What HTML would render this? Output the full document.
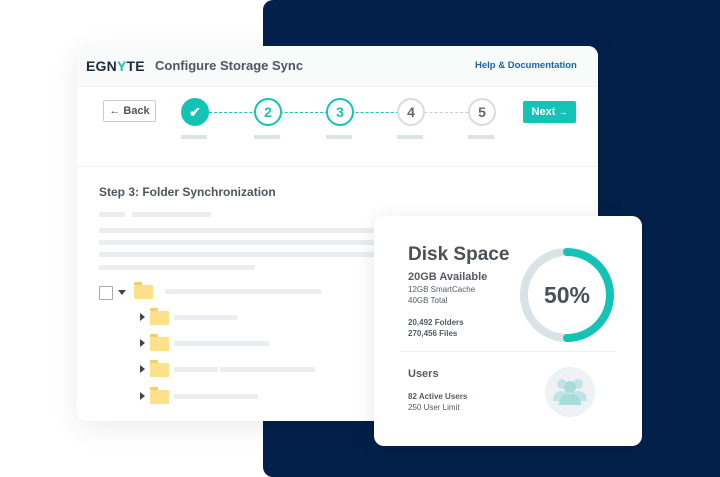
<!DOCTYPE html>
<html><head><style>
*{margin:0;padding:0;box-sizing:border-box}
body{width:720px;height:477px;background:#fff;position:relative;overflow:hidden;font-family:"Liberation Sans",sans-serif}
.navy{position:absolute;left:263px;top:0;width:467px;height:477px;background:#02204a;border-radius:10px}
.card{position:absolute;left:77px;top:46px;width:521px;height:375px;background:#fff;border-radius:10px;box-shadow:0 6px 30px rgba(0,0,0,.08);overflow:hidden}
.hdr{height:41px;background:#f9fafa;border-bottom:1px solid #eef0f1;position:relative}
.abs{position:absolute}
.bar{position:absolute;height:5px;background:#eaeef0}
.circ{position:absolute;width:28px;height:28px;border-radius:50%;border:2px solid #13c4b6;background:#fff;font-weight:bold;font-size:14px;color:#13c4b6;text-align:center;line-height:24px}
.gray{border-color:#d8dcde;color:#666}
.dash{position:absolute;top:66px;height:0;border-top:1px dashed #13c4b6}
.ul{position:absolute;top:89px;width:26px;height:4px;background:#dde3e5}
.fold{position:absolute;width:19px;height:14px;background:#fde08a;border-radius:1px}
.fold:before{content:"";position:absolute;left:0;top:-3px;width:8px;height:3px;background:#f3cd6a;border-radius:1px 1px 0 0}
.tri{position:absolute;width:0;height:0;border-top:4px solid transparent;border-bottom:4px solid transparent;border-left:5px solid #444}
.disk{position:absolute;left:374px;top:216px;width:268px;height:230px;background:#fff;border-radius:10px;box-shadow:0 4px 20px rgba(0,0,0,.1)}
.t{position:absolute;color:#555b62;white-space:nowrap}
</style></head><body>
<div class="navy"></div>
<div class="card">
 <div class="hdr">
  <div class="abs" style="left:9px;top:12px;font-weight:900;font-size:14px;color:#1b2a44;letter-spacing:0.2px">EGN<span style="color:#13c4b6">Y</span>TE</div>
  <div class="abs" style="left:78px;top:12px;font-weight:bold;font-size:13px;color:#4e565f">Configure Storage Sync</div>
  <div class="abs" style="left:398px;top:14px;font-weight:bold;font-size:9.5px;color:#1566b5">Help &amp; Documentation</div>
 </div>
 <div class="abs" style="left:26px;top:54px;width:53px;height:22px;border:1px solid #c8ccd0;border-radius:2px;font-size:11px;font-weight:bold;color:#555;text-align:center;line-height:20px">← Back</div>
 <div class="dash" style="left:132px;width:200px"></div>
 <div class="dash" style="left:332px;width:80px;border-color:#ccc"></div>
 <div class="circ" style="left:104px;top:52px;background:#13c4b6;color:#fff">✔</div>
 <div class="circ" style="left:177px;top:52px">2</div>
 <div class="circ" style="left:249px;top:52px">3</div>
 <div class="circ gray" style="left:320px;top:52px">4</div>
 <div class="circ gray" style="left:391px;top:52px">5</div>
 <div class="ul" style="left:104px"></div><div class="ul" style="left:177px"></div><div class="ul" style="left:249px"></div><div class="ul" style="left:320px"></div><div class="ul" style="left:391px"></div>
 <div class="abs" style="left:446px;top:55px;width:53px;height:22px;background:#13c4b6;border-radius:2px;color:#fff;font-weight:bold;font-size:11px;text-align:center;line-height:22px">Next <span style="font-size:9px">→</span></div>
 <div class="abs" style="left:0;top:120px;width:521px;border-top:1px solid #eef0f1"></div>
 <div class="abs" style="left:22px;top:139px;font-weight:bold;font-size:12px;color:#4e565f">Step 3: Folder Synchronization</div>
 <div class="bar" style="left:22px;top:166px;width:26px"></div>
 <div class="bar" style="left:55px;top:166px;width:79px"></div>
 <div class="bar" style="left:22px;top:182px;width:280px"></div>
 <div class="bar" style="left:22px;top:194px;width:280px"></div>
 <div class="bar" style="left:22px;top:206px;width:280px"></div>
 <div class="bar" style="left:22px;top:219px;width:156px"></div>
 <div class="abs" style="left:22px;top:240px;width:14px;height:14px;border:1px solid #aaa;border-radius:1px"></div>
 <div class="abs" style="left:41px;top:244px;border-left:4px solid transparent;border-right:4px solid transparent;border-top:5px solid #444"></div>
 <div class="fold" style="left:57px;top:239px"></div>
 <div class="bar" style="left:88px;top:243px;width:156px"></div>
 <div class="tri" style="left:63px;top:267px"></div><div class="fold" style="left:73px;top:265px"></div><div class="bar" style="left:97px;top:269px;width:63px"></div>
 <div class="tri" style="left:63px;top:293px"></div><div class="fold" style="left:73px;top:291px"></div><div class="bar" style="left:97px;top:295px;width:95px"></div>
 <div class="tri" style="left:63px;top:319px"></div><div class="fold" style="left:73px;top:317px"></div><div class="bar" style="left:97px;top:321px;width:44px"></div><div class="bar" style="left:143px;top:321px;width:95px"></div>
 <div class="tri" style="left:63px;top:346px"></div><div class="fold" style="left:73px;top:344px"></div><div class="bar" style="left:97px;top:348px;width:84px"></div>
</div>
<div class="disk">
 <div class="t" style="left:34px;top:28px;font-size:19px;font-weight:bold;color:#4a5058">Disk Space</div>
 <div class="t" style="left:34px;top:55px;font-size:11px;font-weight:bold">20GB Available</div>
 <div class="t" style="left:34px;top:69px;font-size:8px">12GB SmartCache</div>
 <div class="t" style="left:34px;top:80px;font-size:8px">40GB Total</div>
 <div class="t" style="left:34px;top:102px;font-size:8px;font-weight:bold">20,492 Folders</div>
 <div class="t" style="left:34px;top:113px;font-size:8px;font-weight:bold">270,456 Files</div>
 <svg class="abs" style="left:144px;top:30px" width="98" height="98" viewBox="0 0 98 98">
  <circle cx="49" cy="49" r="43" fill="none" stroke="#d9e2e4" stroke-width="8"/>
  <path d="M49 6 A43 43 0 0 1 49 92" fill="none" stroke="#13c4b6" stroke-width="8" stroke-linecap="round"/>
  <text x="49" y="57" text-anchor="middle" font-family="Liberation Sans" font-weight="bold" font-size="23" fill="#4a5058">50%</text>
 </svg>
 <div class="abs" style="left:26px;top:135px;width:216px;border-top:1px solid #eef0f1"></div>
 <div class="t" style="left:34px;top:152px;font-size:11px;font-weight:bold">Users</div>
 <div class="t" style="left:34px;top:176px;font-size:8px;font-weight:bold">82 Active Users</div>
 <div class="t" style="left:34px;top:187px;font-size:8px">250 User Limit</div>
 <svg class="abs" style="left:171px;top:151px" width="50" height="50" viewBox="0 0 50 50">
  <circle cx="25" cy="25" r="25" fill="#eef2f4"/>
  <circle cx="17" cy="17" r="5" fill="#c3e4e6"/><circle cx="33" cy="17" r="5" fill="#c3e4e6"/>
  <path d="M8 34 Q8 24 17 24 Q26 24 26 34Z M24 34 Q24 24 33 24 Q42 24 42 34Z" fill="#c3e4e6"/>
  <circle cx="25" cy="20" r="6" fill="#a6dcd9"/>
  <path d="M14 38 Q14 27 25 27 Q36 27 36 38Z" fill="#a6dcd9"/>
 </svg>
</div>
</body></html>
